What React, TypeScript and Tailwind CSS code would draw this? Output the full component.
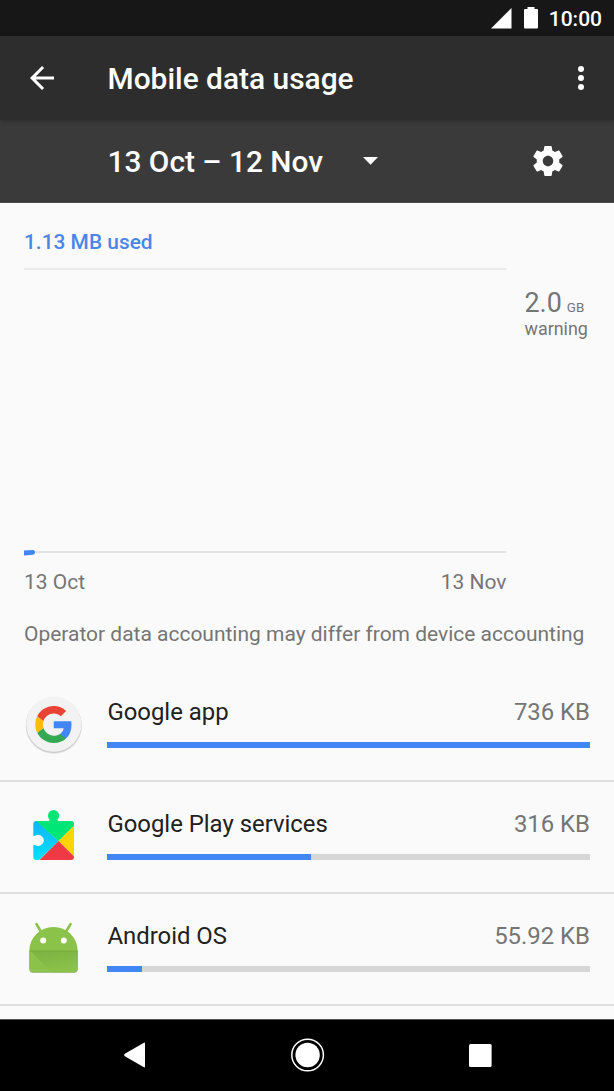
import React from 'react';

interface AppUsage {
  name: string;
  usage: string;
  percent: number;
  icon: React.ReactNode;
}

function GoogleIcon() {
  return (
    <svg width="60" height="60" viewBox="0 0 60 60">
      <circle cx="29.800" cy="30.800" r="28.200" fill="#e6e6e6" />
      <circle cx="29.800" cy="30.200" r="27.800" fill="#cacaca" />
      <circle cx="29.800" cy="29.200" r="27.600" fill="#f2f2f2" />
      <g transform="translate(9.600 9.400) scale(1.680)">
        <path fill="#4285f4" d="M22.56 12.25c0-.78-.07-1.53-.2-2.25H12v4.26h5.92c-.26 1.37-1.04 2.53-2.21 3.31v2.77h3.57c2.08-1.92 3.28-4.74 3.28-8.09z" />
        <path fill="#34a853" d="M12 23c2.97 0 5.46-.98 7.28-2.66l-3.57-2.77c-.98.66-2.23 1.06-3.71 1.06-2.86 0-5.29-1.93-6.16-4.53L2.18 16.93C3.99 20.53 7.7 23 12 23z" />
        <path fill="#fbbc05" d="M5.84 14.09c-.22-.66-.35-1.36-.35-2.09s.13-1.43.35-2.09L2.18 7.07C1.43 8.55 1 10.22 1 12s.43 3.45 1.18 4.93z" />
        <path fill="#ea4335" d="M12 5.38c1.62 0 3.06.56 4.21 1.64l3.15-3.15C17.45 2.09 14.97 1 12 1 7.7 1 3.99 3.47 2.18 7.07l3.66 2.84c.87-2.6 3.3-4.53 6.16-4.53z" />
      </g>
    </svg>
  );
}

function PlayServicesIcon() {
  return (
    <svg width="60" height="60" viewBox="0 0 60 60">
      <defs>
        <clipPath id="puzzle">
          <path d="M12 14h12.600c1.100 0 1.400-1 .6-1.800a5.600 5.600 0 1 1 8.700 0c-.8.8-.5 1.800.6 1.800H47a3 3 0 0 1 3 3v33a3 3 0 0 1-3 3H12.300a3 3 0 0 1-3-3V38.700c0-1 .9-1.400 1.800-.7a5.500 5.500 0 1 0 0-9.200c-.9.600-1.800.2-1.800-.8V17a3 3 0 0 1 2.700-3z" />
        </clipPath>
        <linearGradient id="puzzleBlue" x1="0" y1="0" x2="0" y2="1">
          <stop offset="0" stopColor="#12b5f5" />
          <stop offset="1" stopColor="#00e1ff" />
        </linearGradient>
      </defs>
      <g clipPath="url(#puzzle)">
        <path fill="url(#puzzleBlue)" d="M9 14h4l21.500 20L15 53H9z" />
        <path fill="#00e676" d="M12 14L23 0h14l14 14v4L34.500 34z" />
        <path fill="#ffd400" d="M50.500 18L34.500 34l16 16z" />
        <path fill="#ef3a46" d="M34.500 34L15 53.500h36v-3z" />
      </g>
    </svg>
  );
}

function AndroidIcon() {
  return (
    <svg width="60" height="60" viewBox="0 0 60 60">
      <defs>
        <linearGradient id="fold" x1="0.2" y1="0" x2="0.7" y2="1">
          <stop offset="0" stopColor="#7cb342" />
          <stop offset="1" stopColor="#8bc34a" />
        </linearGradient>
      </defs>
      <path d="M12.500 5.200l5.500 9M46.500 5.200l-5.500 9" stroke="#8bc34a" strokeWidth="2.600" strokeLinecap="round" />
      <path d="M5.300 32h48.400v18a4 4 0 0 1-4 4H9.300a4 4 0 0 1-4-4z" fill="#aebb9f" />
      <path d="M5.300 32a24.200 24 0 0 1 48.400 0v17.200a4 4 0 0 1-4 4H9.300a4 4 0 0 1-4-4z" fill="#8bc34a" />
      <path d="M6.500 32h47.200v17.200a4 4 0 0 1-4 4H27.500z" fill="url(#fold)" />
      <path d="M5.300 31.600h48.400v.8H5.300z" fill="#79ab41" />
      <circle cx="19.200" cy="21.500" r="3" fill="#fff" />
      <circle cx="39.800" cy="21.500" r="3" fill="#fff" />
    </svg>
  );
}

const apps: AppUsage[] = [
  { name: 'Google app', usage: '736 KB', percent: 100, icon: <GoogleIcon /> },
  { name: 'Google Play services', usage: '316 KB', percent: 42.1, icon: <PlayServicesIcon /> },
  { name: 'Android OS', usage: '55.92 KB', percent: 7.1, icon: <AndroidIcon /> },
];

function StatusBar() {
  return (
    <div className="flex h-9 shrink-0 items-center justify-end bg-[#171717] pr-3 text-white">
      <svg width="21" height="21" viewBox="0 0 21 21" fill="currentColor">
        <path d="M20.500 0v20.500H0z" />
      </svg>
      <svg className="mr-[11px] ml-3" width="14" height="22" viewBox="0 0 14 22" fill="currentColor">
        <path d="M3.500 0h7v2H13q1 0 1 1v17.500q0 1-1 1H1q-1 0-1-1V3q0-1 1-1h2.500z" />
      </svg>
      <span className="pt-0.5 text-[21px] leading-none font-medium">10:00</span>
    </div>
  );
}

function Header() {
  return (
    <header className="z-10 flex h-[84px] shrink-0 items-center bg-[#2d2d2d] pr-[15px] pl-6 text-white shadow-[0_1px_4px_rgba(0,0,0,0.25)]">
      <svg width="36" height="36" viewBox="0 0 24 24" fill="currentColor">
        <path d="M20 11H7.830l5.590-5.590L12 4l-8 8 8 8 1.410-1.410L7.830 13H20v-2z" />
      </svg>
      <h1 className="ml-[47.500px] flex-1 pt-0.5 text-[29.900px] leading-9 font-medium">Mobile data usage</h1>
      <svg width="36" height="36" viewBox="0 0 24 24" fill="currentColor">
        <circle cx="12" cy="6" r="2" />
        <circle cx="12" cy="12" r="2" />
        <circle cx="12" cy="18" r="2" />
      </svg>
    </header>
  );
}

function CycleBar() {
  return (
    <div className="flex h-[83px] shrink-0 items-center border-b border-[#4a4a4a] bg-[#3a3a3a] pr-12 pl-[107.500px] text-white">
      <span className="pt-0.5 text-[29.850px] leading-9 font-medium">13 Oct – 12 Nov</span>
      <svg className="ml-[40.500px]" width="15" height="8" viewBox="0 0 15 8" fill="currentColor">
        <path d="M0 0h15L7.500 7.700z" />
      </svg>
      <svg className="ml-auto" width="36" height="36" viewBox="0 0 24 24" fill="currentColor">
        <path d="M19.430 12.980c.04-.32.07-.64.07-.98s-.03-.66-.07-.98l2.110-1.650c.19-.15.24-.42.12-.64l-2-3.460c-.12-.22-.39-.3-.61-.22l-2.490 1c-.52-.4-1.080-.73-1.690-.98l-.38-2.650C14.460 2.180 14.250 2 14 2h-4c-.25 0-.46.18-.49.42l-.38 2.650c-.61.25-1.170.59-1.690.98l-2.490-1c-.23-.09-.49 0-.61.22l-2 3.460c-.13.22-.07.49.12.64l2.110 1.650c-.04.32-.07.65-.07.98s.03.66.07.98l-2.110 1.650c-.19.15-.24.42-.12.64l2 3.460c.12.22.39.3.61.22l2.490-1c.52.4 1.080.73 1.690.98l.38 2.650c.03.24.24.42.49.42h4c.25 0 .46-.18.49-.42l.38-2.650c.61-.25 1.170-.59 1.690-.98l2.490 1c.23.09.49 0 .61-.22l2-3.460c.12-.22.07-.49-.12-.64l-2.110-1.650zM12 15.500c-1.930 0-3.500-1.570-3.500-3.500s1.570-3.500 3.500-3.500 3.500 1.570 3.500 3.500-1.570 3.500-3.500 3.500z" />
      </svg>
    </div>
  );
}

function UsageChart() {
  return (
    <section className="px-6 pt-[25px] text-[20.980px] leading-7 text-[#757575]">
      <div className="text-[20.900px] font-medium text-[#4a86e8]">1.13 MB used</div>
      <div className="mt-3 flex gap-[18px]">
        <div className="w-[482.500px]">
          <svg className="block" width="483" height="288" viewBox="0 0 483 288">
            <path d="M0 1h482.500" stroke="#e6e6e6" strokeWidth="1.500" />
            <path d="M0 284h482.500" stroke="#dadada" strokeWidth="1.500" />
            <path d="M0 282.600l9-.5q2 0 2 2.200t-2 2.500l-9 .7z" fill="#4285f4" />
          </svg>
          <div className="mt-3 flex justify-between">
            <span>13 Oct</span>
            <span>13 Nov</span>
          </div>
        </div>
        <div className="pt-5">
          <div className="text-[26.900px] leading-[30px]">
            2.0<span className="ml-[5px] text-[13.400px]">GB</span>
          </div>
          <div className="-mt-1 text-[17.900px] leading-5">warning</div>
        </div>
      </div>
      <p className="mt-6 whitespace-nowrap">Operator data accounting may differ from device accounting</p>
    </section>
  );
}

function AppRow({ app }: { app: AppUsage }) {
  return (
    <div className="flex h-[111.750px] shrink-0 border-b-2 border-[#dfdfdf] px-6">
      <div className="mr-[23.400px] w-[60px] pt-[25px]">{app.icon}</div>
      <div className="flex-1 pt-[28px]">
        <div className="flex justify-between text-[23.900px] leading-7">
          <span className="text-[#212121]">{app.name}</span>
          <span className="text-[#757575]">{app.usage}</span>
        </div>
        <div className="mt-4 h-1.5 bg-[#d6d6d6]">
          <div className="h-full bg-[#4285f4]" style={{ width: `${app.percent}%` }} />
        </div>
      </div>
    </div>
  );
}

function NavBar() {
  return (
    <nav className="flex h-[72px] shrink-0 items-center justify-between border-t border-[#555] bg-black pr-[122px] pb-px pl-[124px] text-white">
      <svg width="22" height="26" viewBox="0 0 22 26" fill="currentColor">
        <path d="M19.500.9q1.500-.9 1.500.9v22.400q0 1.800-1.500.9L.8 14.200q-1.300-1.200 0-2.400z" />
      </svg>
      <svg width="34" height="34" viewBox="0 0 34 34">
        <circle cx="16.600" cy="17" r="15.800" fill="none" stroke="#fff" strokeWidth="1.500" />
        <circle cx="16.600" cy="17" r="12.200" fill="#fff" />
      </svg>
      <svg width="23" height="23" viewBox="0 0 23 23" fill="currentColor">
        <rect width="22.600" height="23" rx="1.500" />
      </svg>
    </nav>
  );
}

export default function App() {
  return (
    <div className="flex h-[1091px] w-[614px] flex-col overflow-hidden bg-[#fafafa] font-[Roboto,sans-serif]">
      <StatusBar />
      <Header />
      <CycleBar />
      <main className="flex min-h-0 flex-1 flex-col overflow-hidden">
        <UsageChart />
        <div className="mt-[22.300px] flex flex-col">
          {apps.map(app => (
            <AppRow key={app.name} app={app} />
          ))}
        </div>
      </main>
      <NavBar />
    </div>
  );
}
